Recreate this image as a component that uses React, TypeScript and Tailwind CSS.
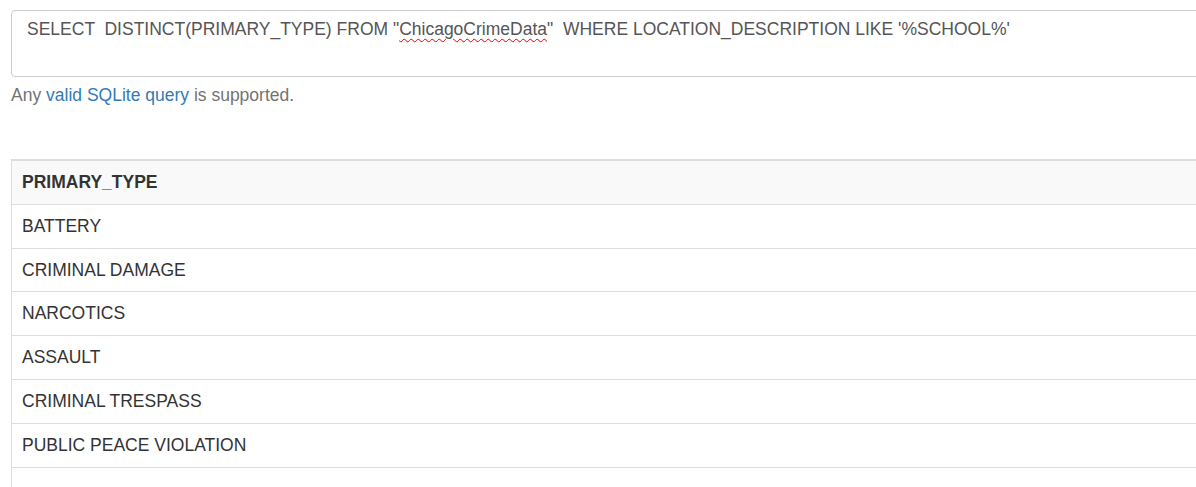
import React from "react";

const rows = [
  "BATTERY",
  "CRIMINAL DAMAGE",
  "NARCOTICS",
  "ASSAULT",
  "CRIMINAL TRESPASS",
  "PUBLIC PEACE VIOLATION",
];

export default function App() {
  return (
    <div
      className="w-[1196px] h-[487px] overflow-hidden bg-white text-[17.5px] leading-[25px] text-[#333]"
      style={{ fontFamily: '"Liberation Sans", Arial, sans-serif' }}
    >
      <div className="pl-[11px] pt-[10px]">
        {/* Query box */}
        <div className="w-[1220px] h-[67px] rounded-[4px] border border-[#ccc] bg-white pl-[15px] pt-[6px] text-[#555] whitespace-pre">
          {'SELECT  DISTINCT(PRIMARY_TYPE) FROM "'}
          <span className="underline decoration-wavy decoration-[#e00] decoration-[1px] underline-offset-[3px]">
            ChicagoCrimeData
          </span>
          {'"  WHERE LOCATION_DESCRIPTION LIKE \'%SCHOOL%\''}
        </div>
        <p className="mt-[6px] text-[#737373]">
          Any <span className="text-[#337ab7]">valid SQLite query</span> is supported.
        </p>

        {/* Results */}
        <div className="mt-[51px] w-[1220px] border-l border-t-2 border-[#ddd]">
          <div className="bg-[#f9f9f9] px-[10px] py-[9px] leading-[24.8px] font-bold border-b border-[#ddd]">
            PRIMARY_TYPE
          </div>
          {rows.map((r) => (
            <div key={r} className="px-[10px] py-[9px] leading-[24.8px] border-b border-[#ddd]">
              {r}
            </div>
          ))}
          <div className="h-[30px]" />
        </div>
      </div>
    </div>
  );
}
